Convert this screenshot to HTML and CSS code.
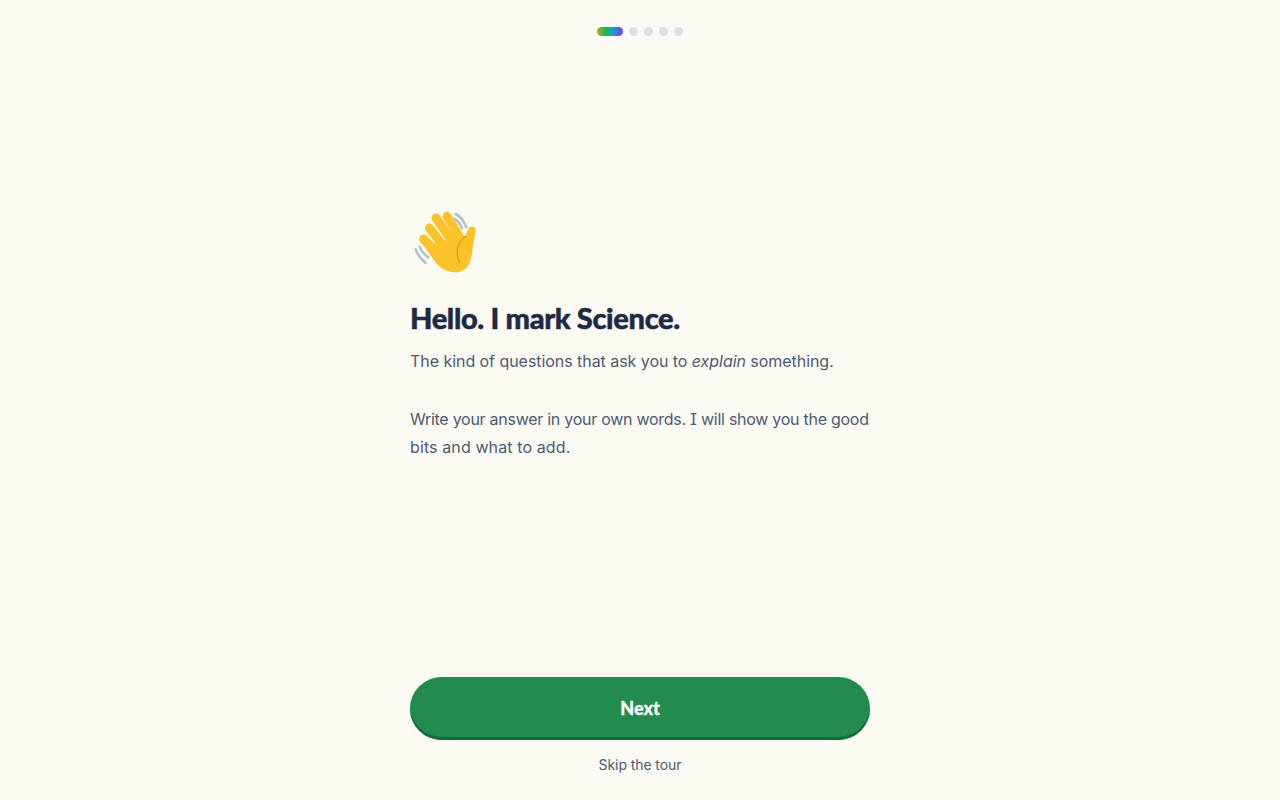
FILE: index.html
```html
<!DOCTYPE html>
<html lang="en">
<head>
<meta charset="utf-8">
<title>Tour</title>
<link rel="stylesheet" href="styles.css">
</head>
<body>
<main class="screen">
  <div class="progress">
    <span class="dot dot-active"></span>
    <span class="dot"></span>
    <span class="dot"></span>
    <span class="dot"></span>
    <span class="dot"></span>
  </div>
  <section class="content">
    <svg class="wave" viewBox="30 30 200 192" aria-hidden="true">
      <g class="wave-lines">
        <path d="M167 42C182 50 193 65 199 82"/>
        <path d="M163 57C173 63 181 72 186 84"/>
        <path d="M47 148C52 163 62 177 76 188"/>
        <path d="M59 140C63 151 72 163 85 172"/>
      </g>
      <g class="fingers">
        <path d="M71 117L122 167"/>
        <path d="M88 84L140 150"/>
        <path d="M108 54L160 130"/>
        <path d="M141 49L185 122"/>
      </g>
      <path class="palm" d="M60 122L106 186C122 208 150 221 177 216C203 210 215 186 217 150L227 94C229 78 211 74 205 87L192 116L150 118L100 132Z"/>
      <path class="crease" d="M196 108C180 122 170 140 171 158C172 168 174 176 178 187"/>
    </svg>
    <h1 class="title">Hello. I mark Science.</h1>
    <p class="text text-intro">The kind of questions that ask you to <em>explain</em> something.</p>
    <p class="text text-detail">Write your answer in your own words. I will show you the good <span class="text-tail">bits and what to add.</span></p>
  </section>
  <footer class="actions">
    <button class="next">Next</button>
    <button class="skip">Skip the tour</button>
  </footer>
</main>
</body>
</html>
```
FILE: styles.css
```css
* { box-sizing: border-box; }
html, body { margin: 0; height: 100%; }
body {
  background: #fbfaf3;
  font-family: "Inter", "Liberation Sans", sans-serif;
  color: #4e5a72;
}
.screen {
  width: 460px;
  height: 800px;
  margin: 0 auto;
  display: flex;
  flex-direction: column;
}
.progress {
  display: flex;
  justify-content: center;
  align-items: center;
  gap: 6px;
  padding-top: 27px;
  height: 36px;
}
.dot {
  width: 9px;
  height: 9px;
  border-radius: 50%;
  background: #dcdde8;
}
.dot-active {
  width: 26px;
  border-radius: 5px;
  background: linear-gradient(90deg, #a3b31f, #2fb344 30%, #12a9b5 55%, #7a3ff5);
}
.content {
  flex: 1;
  display: flex;
  flex-direction: column;
  justify-content: center;
  padding-bottom: 42px;
}
.wave {
  display: block;
  width: 66.67px;
  height: 64px;
  margin-bottom: 26px;
}
.wave-lines {
  fill: none;
  stroke: #b4c2ca;
  stroke-width: 8;
  stroke-linecap: round;
}
.fingers {
  fill: none;
  stroke: #fcc22a;
  stroke-width: 27;
  stroke-linecap: round;
}
.palm { fill: #fcc22a; }
.crease {
  fill: none;
  stroke: #e39a12;
  stroke-width: 4;
  stroke-linecap: round;
}
.title {
  margin: 0 0 11px;
  font-family: "Lato", sans-serif;
  font-weight: 900;
  font-size: 29px;
  line-height: 36px;
  letter-spacing: -0.33px;
  -webkit-text-stroke: 0.5px #1e2a44;
  color: #1e2a44;
}
.text {
  margin: 0 0 30px;
  font-size: 16px;
  line-height: 28px;
  font-feature-settings: "cv08";
}
.text-intro { letter-spacing: -0.05px; }
.text-detail { margin-bottom: 0; letter-spacing: -0.27px; }
.text-tail { letter-spacing: 0.11px; }
.actions {
  display: flex;
  flex-direction: column;
  align-items: center;
  padding-bottom: 24px;
}
.next {
  width: 100%;
  height: 63px;
  border: 0;
  padding: 0 0 1px;
  border-radius: 32px;
  background: #218c4e;
  box-shadow: inset 0 -3px 0 #176b3b;
  color: #fff;
  font-family: "Lato", sans-serif;
  font-weight: 900;
  font-size: 18px;
  -webkit-text-stroke: 0.3px #fff;
}
.skip {
  margin-top: 14px;
  border: 0;
  padding: 0;
  background: none;
  color: #4e5a72;
  font-family: "Inter", sans-serif;
  font-size: 14px;
  line-height: 22px;
  letter-spacing: -0.08px;
}
```
